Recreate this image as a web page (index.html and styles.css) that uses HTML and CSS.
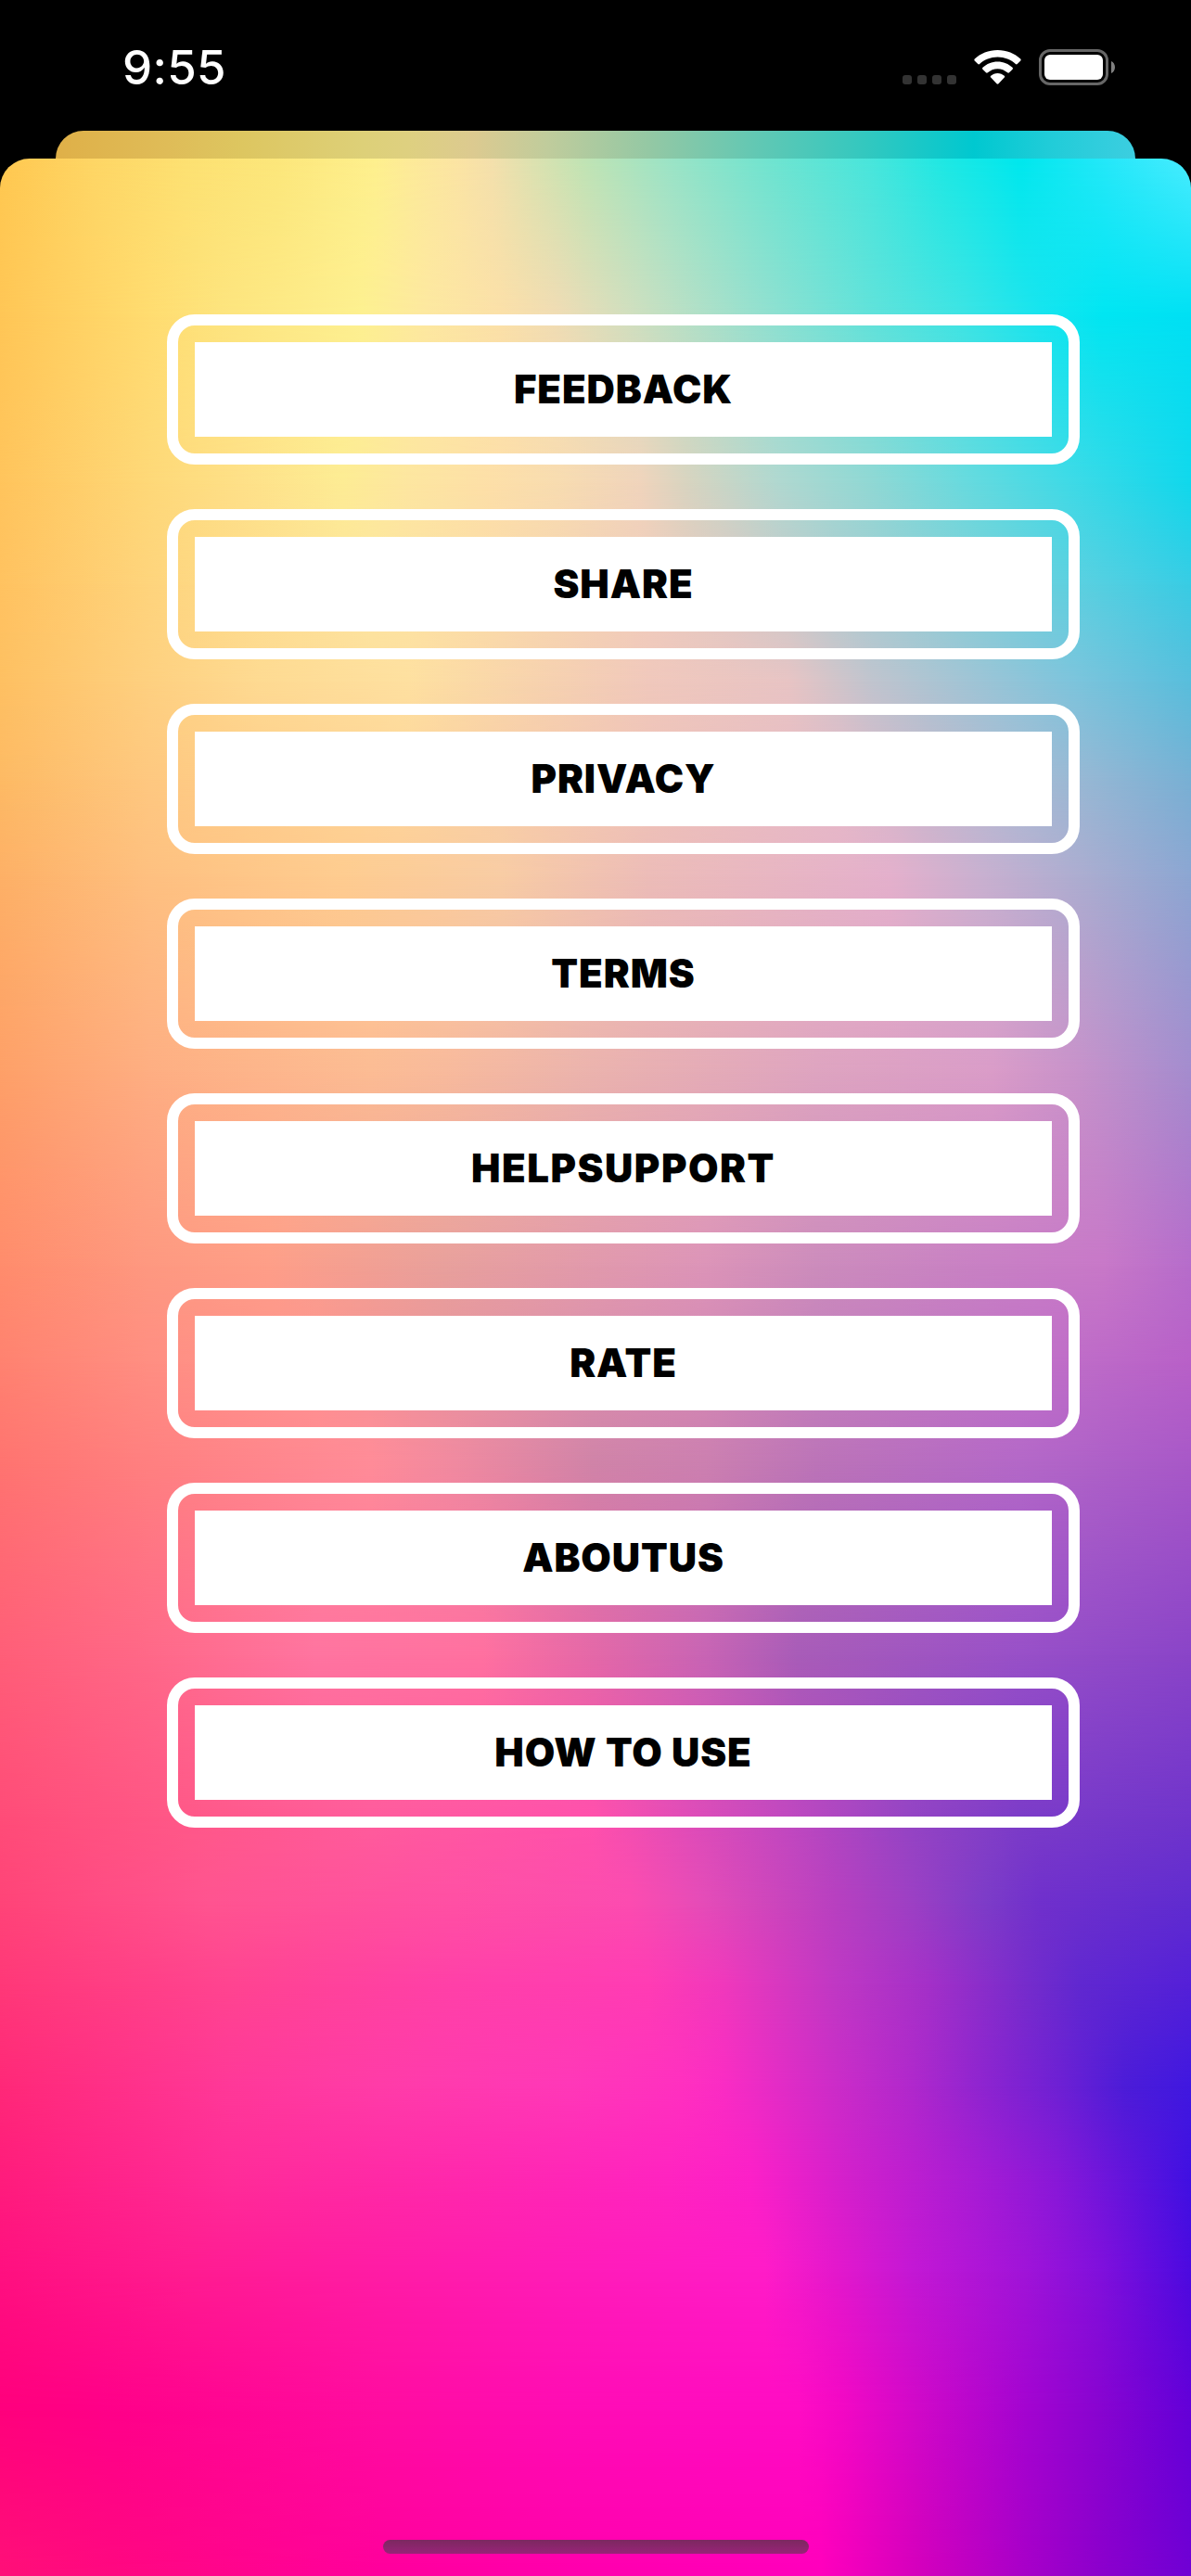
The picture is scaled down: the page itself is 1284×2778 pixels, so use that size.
FILE: index.html
```html
<!DOCTYPE html>
<html lang="en">
<head>
<meta charset="utf-8">
<title>Settings</title>
<link rel="stylesheet" href="styles.css">
</head>
<body>
<div class="screen">
  <header class="status">
    <span class="time">9:55</span>
    <div class="indicators">
      <div class="cellular"><i></i><i></i><i></i><i></i></div>
      <svg class="wifi" width="51" height="37" viewBox="0 0 51 37">
        <path d="M25.5 0C35.2 0 44 3.7 50.2 9.6c.6.6.6 1.3.1 1.9l-3.6 3.6c-.5.5-1.2.5-1.8 0C39.8 10.400 33 7.600 25.500 7.600S11.200 10.400 6.100 15.100c-.6.5-1.300.5-1.800 0L.7 11.500c-.5-.6-.5-1.300.1-1.900C7 3.700 15.800 0 25.500 0z"/>
        <path d="M25.500 12.500c6.200 0 11.800 2.400 16 6.300.6.6.6 1.300.1 1.900L38 24.300c-.5.5-1.300.5-1.900 0-2.800-2.500-6.500-4.100-10.600-4.100s-7.800 1.600-10.600 4.100c-.6.5-1.400.5-1.900 0l-3.600-3.600c-.5-.6-.5-1.300.1-1.900 4.200-3.900 9.800-6.300 16-6.300z"/>
        <path d="M25.500 24.900c2.800 0 5.400 1.100 7.300 2.800.6.500.6 1.300 0 1.900l-6.300 6.600c-.6.600-1.400.6-2 0l-6.300-6.600c-.6-.6-.6-1.400 0-1.900 1.900-1.700 4.500-2.800 7.300-2.800z"/>
      </svg>
      <svg class="battery" width="82" height="39" viewBox="0 0 82 39">
        <rect class="battery-shell" x="1.500" y="1.500" width="72" height="36" rx="10.500"/>
        <rect class="battery-level" x="6" y="6" width="63" height="27" rx="6"/>
        <path class="battery-cap" d="M78 13c2.500 1.200 4 3.600 4 6.500S80.500 24.800 78 26z"/>
      </svg>
    </div>
  </header>
  <div class="backdrop"></div>
  <main class="sheet">
    <div class="mesh">
      <i class="r1"></i><i class="r2"></i><i class="r3"></i><i class="r4"></i><i class="r5"></i>
      <i class="r6"></i><i class="r7"></i><i class="r8"></i><i class="r9"></i><i class="r10"></i>
      <i class="r11"></i><i class="r12"></i><i class="r13"></i><i class="r14"></i><i class="r15"></i>
      <i class="r16"></i><i class="r17"></i><i class="r18"></i><i class="r19"></i><i class="r20"></i>
    </div>
    <nav class="menu">
      <button class="item"><span>FEEDBACK</span></button>
      <button class="item"><span>SHARE</span></button>
      <button class="item"><span>PRIVACY</span></button>
      <button class="item"><span>TERMS</span></button>
      <button class="item item-wide"><span>HELPSUPPORT</span></button>
      <button class="item"><span>RATE</span></button>
      <button class="item"><span>ABOUTUS</span></button>
      <button class="item"><span>HOW TO USE</span></button>
    </nav>
    <div class="home"></div>
  </main>
</div>
</body>
</html>
```
FILE: styles.css
```css
* { box-sizing: border-box; }
body { margin: 0; background: #000; font-family: Inter, "Liberation Sans", sans-serif; }
.screen { width: 1284px; height: 2778px; display: flex; flex-direction: column; overflow: hidden; background: #000; }

.status { height: 141px; flex: none; display: flex; justify-content: space-between; padding: 0 82px 0 132px; }
.time { color: #fff; font-size: 51px; font-weight: 500; line-height: 60px; margin-top: 43px; letter-spacing: 0.3px; }
.indicators { display: flex; align-items: flex-start; padding-top: 53px; }
.cellular { display: flex; gap: 6px; margin: 28px 19px 0 0; }
.cellular i { width: 10px; height: 10px; border-radius: 3px; background: #333; }
.wifi { fill: #fff; margin: 1px 19px 0 0; }
.battery-shell { fill: none; stroke: #666; stroke-width: 3; }
.battery-level { fill: #fff; }
.battery-cap { fill: #808080; }

.backdrop { flex: none; height: 30px; margin: 0 60px; border-radius: 30px 30px 0 0;
  background: linear-gradient(90deg, #dfb048 0, #dfbc58 120px, #ddc660 200px, #ddd078 330px, #ded080 380px, #dcca90 450px, #c0cc9c 530px, #94c8a4 640px, #60c8b4 760px, #30c8c0 880px, #00c8d0 990px, #20ccd8 1070px, #3ccee0 1164px); }

.sheet { flex: 1; display: grid; overflow: hidden; border-radius: 32px 32px 0 0; }
.mesh, .menu, .home { grid-area: 1 / 1; }

/* Each strip is one row of the colour mesh; it fades in over the strip above. */
.mesh { display: grid; isolation: isolate; }
.mesh i { grid-area: 1 / 1; -webkit-mask-image: linear-gradient(transparent var(--a), #000 var(--b)); mask-image: linear-gradient(transparent var(--a), #000 var(--b)); }
.mesh .r1 { --a: -2px; --b: -1px; background: linear-gradient(90deg, #ffc850 0, #fed665 100px, #fde172 200px, #fce77b 300px, #fef08e 405px, #fdeb98 440px, #fbe4a4 495px, #f4e0ac 530px, #dce2b0 575px, #c0e4b4 630px, #9ce4c6 720px, #70e4d0 830px, #48e6dc 940px, #1ee8e4 1020px, #00e8ee 1100px, #28e8fa 1200px, #48ecff 1284px); }
.mesh .r2 { --a: 0px; --b: 169px; background: linear-gradient(90deg, #ffc656 0, #ffdc70 160px, #fde47e 240px, #fdf090 390px, #fde8a0 460px, #fbe0a8 540px, #f0dcb4 600px, #ccdfc0 690px, #90e0d0 830px, #60e2da 940px, #3ce4e4 1040px, #18e4ee 1120px, #00e6f2 1190px, #00e0f4 1284px); }
.mesh .r3 { --a: 169px; --b: 349px; background: linear-gradient(90deg, #ffc45c 0, #fed878 160px, #fee088 260px, #fdec94 370px, #fde6a0 440px, #fddfa8 530px, #f8dcb0 600px, #f0d4bc 690px, #d8d4c0 740px, #b0d8d0 840px, #90d8d4 940px, #68dade 1040px, #40dae6 1150px, #20d8ea 1240px, #10d8ec 1284px); }
.mesh .r4 { --a: 349px; --b: 459px; background: linear-gradient(90deg, #ffc260 0, #fed47c 160px, #fde6a0 400px, #fbdca8 520px, #f0ccbc 700px, #dcc8c4 790px, #b0ccd0 900px, #7cd0d8 1060px, #5cd0e0 1160px, #38cce4 1284px); }
.mesh .r5 { --a: 459px; --b: 564px; background: linear-gradient(90deg, #fec062 0, #fed080 160px, #feda92 280px, #fee0a0 440px, #f8d4ac 560px, #f0c8bc 700px, #e8c4c4 850px, #c0c4ce 940px, #9cc4d6 1060px, #7cc4dc 1160px, #58bedc 1284px); }
.mesh .r6 { --a: 564px; --b: 669px; background: linear-gradient(90deg, #fdba64 0, #fec880 160px, #fed69a 430px, #f4c8b0 620px, #ecc0bc 750px, #e5bac8 905px, #c4b8cc 1000px, #a8bcd4 1100px, #98b8d4 1164px, #78b0d4 1284px); }
.mesh .r7 { --a: 669px; --b: 774px; background: linear-gradient(90deg, #fdb066 0, #fec080 160px, #fecc90 370px, #f8cca4 540px, #ecbcb8 700px, #e4b0cc 960px, #c8b0d0 1060px, #a8acd0 1180px, #8ca6d2 1284px); }
.mesh .r8 { --a: 774px; --b: 984px; background: linear-gradient(90deg, #fea068 0, #feae82 160px, #fcbc94 400px, #f8ba9c 480px, #ecb4ac 620px, #dea4c0 880px, #da9cc8 1070px, #c892ca 1160px, #a48cce 1284px); }
.mesh .r9 { --a: 984px; --b: 1194px; background: linear-gradient(90deg, #ff8c6c 0, #fe9880 160px, #fe9e88 290px, #e8a09c 480px, #dc94b8 760px, #cc8cbc 880px, #c880c4 1060px, #c878c8 1190px, #b66ccb 1284px); }
.mesh .r10 { --a: 1194px; --b: 1299px; background: linear-gradient(90deg, #ff8270 0, #ff8e82 160px, #ff9490 340px, #e8949c 480px, #dc90ac 620px, #d488b4 760px, #c480bc 880px, #c070c8 1120px, #b860c8 1284px); }
.mesh .r11 { --a: 1299px; --b: 1404px; background: linear-gradient(90deg, #ff7470 0, #ff8080 160px, #ff8c98 400px, #f08aa0 490px, #d084a8 640px, #cc80b0 760px, #bc74b8 880px, #b468c8 1100px, #a858c8 1284px); }
.mesh .r12 { --a: 1404px; --b: 1614px; background: linear-gradient(90deg, #ff5e78 0, #ff6888 160px, #ff74a0 340px, #ff70a0 520px, #e468a8 640px, #c864b4 760px, #a85cb8 860px, #9850c8 1100px, #8a44c8 1284px); }
.mesh .r13 { --a: 1614px; --b: 1789px; background: linear-gradient(90deg, #ff4c78 0, #ff5888 200px, #ff5c9c 400px, #ff50ac 640px, #e04cb8 740px, #c048c0 850px, #9444c4 980px, #7c3cc8 1100px, #7034cc 1284px); }
.mesh .r14 { --a: 1789px; --b: 1879px; background: linear-gradient(90deg, #ff4478 0, #ff5490 225px, #ff50a4 490px, #fc4cb0 680px, #e44cb8 760px, #b840c0 900px, #9c40c4 983px, #7c3cc8 1064px, #7030cc 1120px, #602cd0 1284px); }
.mesh .r15 { --a: 1879px; --b: 1969px; background: linear-gradient(90deg, #ff3878 0, #ff4490 245px, #ff40a8 490px, #ff3cb4 700px, #f038bc 780px, #c038c4 900px, #a430c8 1000px, #742ccc 1110px, #6028d0 1165px, #5420d8 1284px); }
.mesh .r16 { --a: 1969px; --b: 2079px; background: linear-gradient(90deg, #ff2878 0, #ff3898 245px, #ff3ca8 410px, #ff38b8 614px, #ff30c0 735px, #fa2cc4 780px, #cc2cc8 900px, #b028cc 983px, #8c24d0 1064px, #6c20d4 1146px, #4c1cd8 1212px, #4018e0 1284px); }
.mesh .r17 { --a: 2079px; --b: 2179px; background: linear-gradient(90deg, #ff1c7c 0, #ff2c98 245px, #ff28ac 490px, #ff24c0 720px, #fc20c8 810px, #d020cc 920px, #a81cd4 1050px, #8818d8 1140px, #6014dc 1220px, #4010e2 1284px); }
.mesh .r18 { --a: 2179px; --b: 2279px; background: linear-gradient(90deg, #ff1080 0, #ff1c90 200px, #ff1ca4 400px, #ff1cb8 614px, #ff1cc8 825px, #e418cc 900px, #c418d4 982px, #a014d8 1105px, #8010dc 1187px, #4c0ae0 1284px); }
.mesh .r19 { --a: 2279px; --b: 2429px; background: linear-gradient(90deg, #ff007c 0, #ff0088 110px, #ff0ca0 410px, #ff0cb4 614px, #ff0cc4 860px, #f408c4 905px, #d008c8 990px, #a404d0 1105px, #8804d0 1187px, #6400d8 1284px); }
.mesh .r20 { --a: 2429px; --b: 2607px; background: linear-gradient(90deg, #ff1078 0, #ff0880 120px, #ff009c 410px, #ff00ac 614px, #ff00bc 885px, #d400bc 990px, #a800c8 1105px, #8c00cc 1187px, #7000d4 1284px); }

.menu { position: relative; padding: 168px 120px 0 180px; display: flex; flex-direction: column; gap: 48px; }
.item { height: 162px; flex: none; width: 984px; padding: 18px; border: 12px solid #fff; border-radius: 30px; background: none; font: inherit; display: flex; }
.item span { flex: 1; height: 102px; background: #fff; color: #000; font-size: 42px; font-weight: 900; line-height: 102px; text-align: center; letter-spacing: 0.9px; }
.item-wide span { letter-spacing: 1.5px; }

.home { position: relative; align-self: end; justify-self: center; width: 459px; height: 15px; margin-bottom: 24px; border-radius: 8px; background: linear-gradient(#7c2860, #982478); }
```
